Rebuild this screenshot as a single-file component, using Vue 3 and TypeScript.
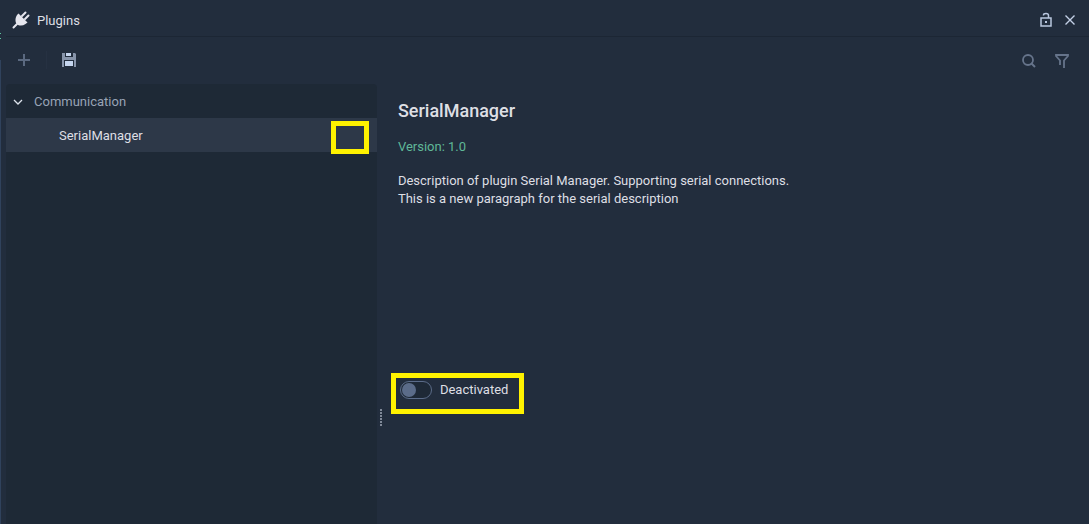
<script setup lang="ts">
import { ref } from 'vue'

interface Plugin {
  name: string
  version: string
  description: string[]
}

const plugin: Plugin = {
  name: 'SerialManager',
  version: '1.0',
  description: [
    'Description of plugin Serial Manager. Supporting serial connections.',
    'This is a new paragraph for the serial description',
  ],
}
const active = ref(false)
const expanded = ref(true)
</script>

<template>
  <main class="window">
    <div class="edge" aria-hidden="true"><i></i><b></b></div>
    <header class="titlebar">
      <svg class="plug" width="18" height="18" viewBox="0 0 18 18" aria-hidden="true">
        <path d="M1.500 16.500 5 13M10 5 13.500 1.500M13 8 16.500 4.500" fill="none" stroke="#e6e6ee" stroke-width="2" stroke-linecap="round" />
        <path d="M6.500 2.500 15.500 11.500 13.500 13Q10 15.500 6 14L4 12Q2.500 8 5 4Z" fill="#e6e6ee" />
      </svg>
      <h1>Plugins</h1>
      <button type="button" class="lock" aria-label="Lock panel">
        <svg width="12" height="16" viewBox="0 0 12 16">
          <path d="M1 6H11V14H1ZM3.500 3.500V3Q3.500 1.500 6 1.500Q8.500 1.500 8.500 3.500V6" fill="none" stroke="#b9c7de" stroke-width="1.500" />
          <rect x="5" y="9" width="2" height="2" fill="#b9c7de" />
        </svg>
      </button>
      <button type="button" class="close" aria-label="Close">
        <svg width="12" height="12" viewBox="0 0 12 12">
          <path d="M1.500 1.500 10.500 10.500M10.500 1.500 1.500 10.500" stroke="#c3d0e6" stroke-width="1.400" />
        </svg>
      </button>
    </header>

    <div class="toolbar">
      <button type="button" aria-label="Add plugin">
        <svg width="12" height="12" viewBox="0 0 12 12"><path d="M6 0V12M0 6H12" stroke="#5b6980" stroke-width="2" /></svg>
      </button>
      <span class="separator"></span>
      <button type="button" aria-label="Save">
        <svg width="14" height="14" viewBox="0 0 14 14">
          <path d="M0 0H13L14 1V14H0Z" fill="#8794aa" />
          <path d="M3 0H11V4H3Z" fill="#222d3d" />
          <path d="M4 0H9V3H4Z" fill="#c5d5ee" />
          <path d="M2 7H12V14H2Z" fill="#222d3d" />
          <path d="M3 8H11V13H3Z" fill="#c5d5ee" />
        </svg>
      </button>
      <span class="spacer"></span>
      <button type="button" aria-label="Search">
        <svg width="14" height="16" viewBox="0 0 14 16"><circle cx="6" cy="8" r="5" fill="none" stroke="#66748b" stroke-width="1.800" /><path d="M9 11 13 15" stroke="#66748b" stroke-width="2" /></svg>
      </button>
      <button type="button" class="filter" aria-label="Filter">
        <svg width="14" height="16" viewBox="0 0 14 16"><path d="M5 13V8.500L1 4V3H13V4L9 8.500V16" fill="none" stroke="#66748b" stroke-width="1.800" /></svg>
      </button>
    </div>

    <div class="content">
      <nav class="tree" aria-label="Plugins">
        <button type="button" class="group" :aria-expanded="expanded" @click="expanded = !expanded">
          <svg width="10" height="8" viewBox="0 0 10 8" aria-hidden="true"><path d="M1 2 5 6 9 2" fill="none" stroke="#dde3ec" stroke-width="1.300" /></svg>
          Communication
        </button>
        <button v-if="expanded" type="button" class="entry">
          {{ plugin.name }}
          <span class="marker entry-marker"></span>
        </button>
      </nav>
      <div class="splitter" role="separator" aria-orientation="vertical"><span></span></div>
      <section class="details">
        <h2>{{ plugin.name }}</h2>
        <p class="version">Version: {{ plugin.version }}</p>
        <p class="description"><template v-for="(line, i) in plugin.description" :key="line"><br v-if="i > 0">{{ line }}</template></p>
        <label class="switch">
          <input v-model="active" type="checkbox" role="switch">
          <span>{{ active ? 'Activated' : 'Deactivated' }}</span>
          <span class="marker switch-marker"></span>
        </label>
      </section>
    </div>
  </main>
</template>

<style>
html,
body {
  background: #222d3d;
}
</style>

<style scoped>
.window {
  position: relative;
  display: flex;
  flex-direction: column;
  box-sizing: border-box;
  min-height: 100vh;
  padding-left: 6px;
  background: #222d3d;
  color: #dedfe4;
  font: 13px/18px Roboto, sans-serif;
}
.edge {
  position: absolute;
  left: 0;
  top: 0;
  bottom: 0;
  width: 1px;
}
.edge i {
  position: absolute;
  top: 33px;
  width: 1px;
  height: 1px;
  background: #5fc3a0;
  box-shadow: 0 5px #5fc3a0;
}
.edge b {
  position: absolute;
  top: 60px;
  bottom: 0;
  width: 1px;
  background: #30425c;
}
button {
  display: flex;
  align-items: center;
  padding: 0;
  border: 0;
  background: none;
  color: inherit;
  font: inherit;
}
svg {
  display: block;
}
.titlebar {
  display: flex;
  align-items: center;
  height: 36px;
  padding: 4px 13px 0 6px;
  box-sizing: border-box;
  box-shadow: 0 1px #1c2634;
}
h1 {
  flex: 1;
  margin: 0 0 0 7px;
  font-size: 13px;
  font-weight: 400;
  line-height: 20px;
  padding-top: 2px;
}
.close {
  margin-left: 12px;
}
.toolbar {
  display: flex;
  align-items: center;
  height: 48px;
  padding: 0 20px 0 12px;
}
.separator {
  width: 1px;
  height: 18px;
  margin: 0 15px 0 16px;
  background: #263142;
}
.spacer {
  flex: 1;
}
.filter {
  margin-left: 19px;
}
.content {
  display: flex;
  flex: 1;
}
.tree {
  width: 34.250%;
  flex: none;
  border-radius: 4px 4px 0 0;
  background: #1e2936;
}
.group,
.entry {
  position: relative;
  box-sizing: border-box;
  width: 100%;
  height: 34px;
  padding-top: 2px;
  text-align: left;
}
.group {
  gap: 11px;
  padding-left: 7px;
  color: #98a3b5;
}
.entry {
  padding-left: 53px;
  background: #2d3848;
}
.marker {
  position: absolute;
  box-sizing: border-box;
  border: 5px solid #fff200;
  pointer-events: none;
}
.entry-marker {
  right: 8px;
  top: 3px;
  width: 38px;
  height: 33px;
}
.splitter {
  width: 8px;
  flex: none;
}
.splitter span {
  display: block;
  width: 2px;
  height: 18px;
  margin: 325px 0 0 3px;
  background: repeating-linear-gradient(#808998 0 2px, transparent 2px 3px);
}
.details {
  flex: 1;
  padding: 16px 13px;
}
h2 {
  margin: 0;
  font-size: 18px;
  font-weight: 500;
  line-height: 22px;
}
p {
  margin: 16px 0 0;
}
.version {
  color: #5fb898;
}
.switch {
  position: relative;
  display: inline-flex;
  align-items: center;
  gap: 8px;
  margin: 173px 0 0 2px;
}
.switch input {
  appearance: none;
  display: flex;
  align-items: center;
  box-sizing: border-box;
  width: 32px;
  height: 18px;
  margin: 0;
  padding: 1px;
  border: 1px solid #5b6c89;
  border-radius: 9px;
  background: #1e2936;
}
.switch input::before {
  content: '';
  width: 14px;
  height: 14px;
  border-radius: 50%;
  background: #5b6c89;
}
.switch input:checked {
  justify-content: flex-end;
}
.switch-marker {
  left: -9px;
  right: -16px;
  top: -8px;
  height: 41px;
}
</style>
